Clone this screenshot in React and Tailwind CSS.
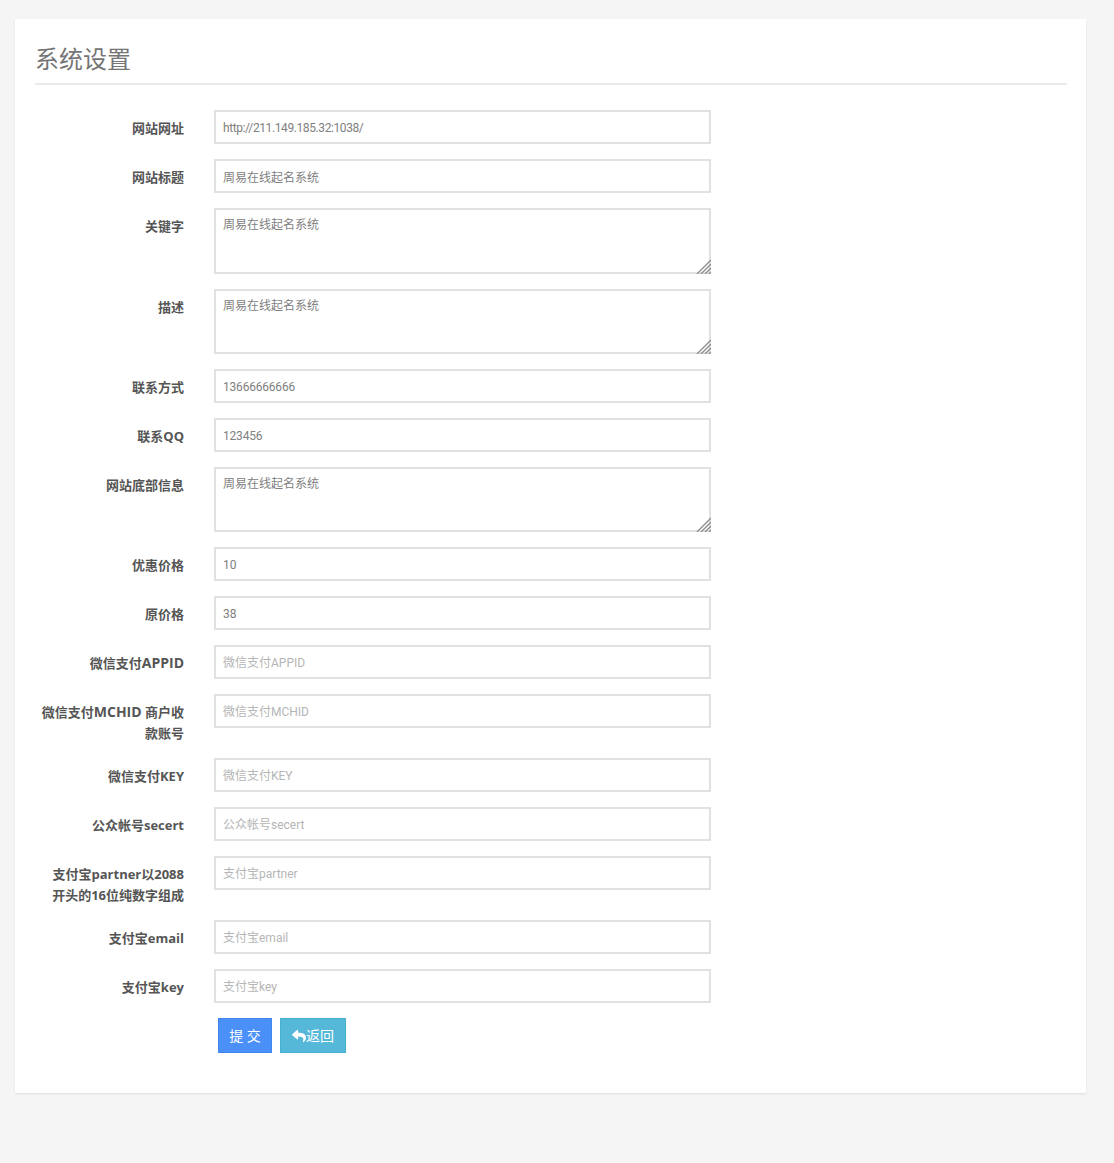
import { FaReply } from 'react-icons/fa';

const fields = [
  { label: '网站网址', value: 'http://211.149.185.32:1038/', tight: 'tracking-[-0.4px]' },
  { label: '网站标题', value: '周易在线起名系统' },
  { label: '关键字', value: '周易在线起名系统', area: 'h-[66px]' },
  { label: '描述', value: '周易在线起名系统', area: 'h-[65px]' },
  { label: '联系方式', value: '13666666666', tight: 'tracking-[-0.2px]' },
  { label: '联系QQ', value: '123456', tight: 'tracking-[-0.2px]' },
  { label: '网站底部信息', value: '周易在线起名系统', area: 'h-[65px]' },
  { label: '优惠价格', value: '10' },
  { label: '原价格', value: '38' },
  { label: <>微信支付<span className="text-[14px] leading-[14px]">APPID</span></>, placeholder: '微信支付APPID' },
  { label: <>微信支付<span className="text-[14px] leading-[14px]">MCHID</span> 商户收款账号</>, placeholder: '微信支付MCHID' },
  { label: '微信支付KEY', placeholder: '微信支付KEY' },
  { label: '公众帐号secert', placeholder: '公众帐号secert' },
  { label: '支付宝partner以2088开头的16位纯数字组成', placeholder: '支付宝partner' },
  { label: '支付宝email', placeholder: '支付宝email' },
  { label: '支付宝key', placeholder: '支付宝key' },
];

const font = "font-['Open_Sans','Noto_Sans_CJK_SC',sans-serif]";
const control =
  "block w-[497px] border-2 border-[#e1e1e1] bg-white px-[7px] font-['Roboto','Noto_Sans_CJK_SC',sans-serif] text-[12px] text-[#808080] placeholder:text-[#b5b5b5] outline-none";

// the reference shows a bigger grip than the browser's own resize handle
const Grip = () => (
  <svg
    className="absolute right-0 bottom-0 pointer-events-none"
    width="15"
    height="15"
    viewBox="0 0 15 15"
    stroke="#8a8a8a"
    strokeWidth="1.3"
  >
    <path d="M1 15 15 1M5 15 15 5M9 15 15 9M13 15 15 13" />
  </svg>
);

const Row = ({ label, value, placeholder, area, tight }) => (
  <div className="flex gap-[30px] mb-[15px]">
    <label className="w-[149px] pl-[5px] pt-[8px] -mb-[1px] text-right text-[13px] leading-[21px] font-bold text-[#555]">
      {label}
    </label>
    {area ? (
      <div className="relative">
        <textarea
          className={`${control} ${area} resize-none pt-[6px] pb-[5px] leading-[18px]`}
          defaultValue={value}
        />
        <Grip />
      </div>
    ) : (
      <input
        className={`${control} h-[34px] pt-[1px] leading-[18px] ${tight || ''}`}
        defaultValue={value}
        placeholder={placeholder}
      />
    )}
  </div>
);

export default function App() {
  return (
    <div className={`min-h-screen bg-[#f5f5f5] pt-[19px] pl-[15px] ${font}`}>
      <div className="w-[1071px] h-[1074px] bg-white pl-5 pr-[19px] shadow-[0_1px_2px_rgba(0,0,0,0.1)]">
        <h1 className="h-[66px] pt-[21px] border-b-2 border-[#ebebeb] text-[24px] leading-[38px] text-[#757575]">
          系统设置
        </h1>
        <form className="mt-[25px]">
          {fields.map((field, i) => (
            <Row key={i} {...field} />
          ))}
          <div className="flex gap-2 ml-[183px]">
            <button
              type="button"
              className="h-[35px] w-[54px] border border-[#3f86ef] bg-[#4a90f8] text-[14px] text-white"
            >
              提 交
            </button>
            <button
              type="button"
              className="flex h-[35px] w-[66px] items-center justify-center border border-[#46b0cf] bg-[#55b8d8] text-[14px] text-white"
            >
              <FaReply className="text-[14px]" />
              返回
            </button>
          </div>
        </form>
      </div>
    </div>
  );
}
